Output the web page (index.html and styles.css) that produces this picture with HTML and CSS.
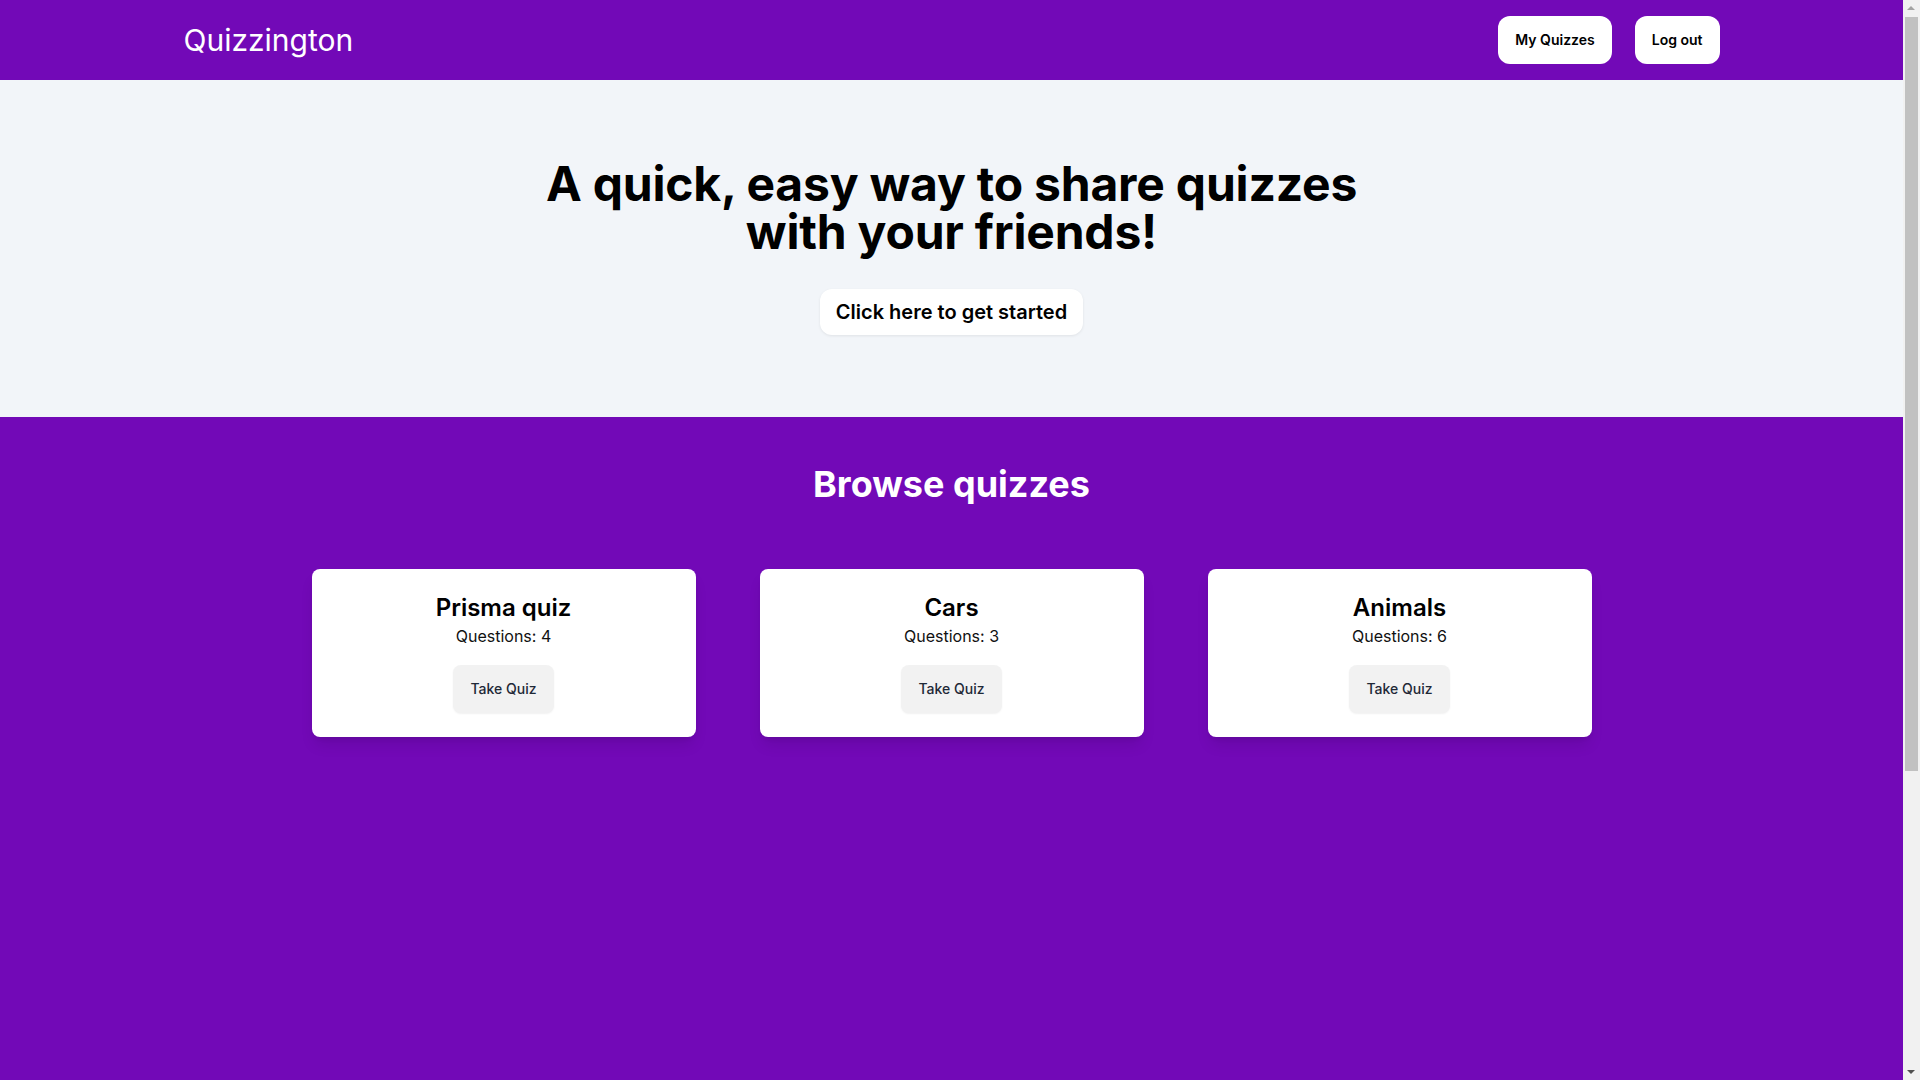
FILE: index.html
```html
<!DOCTYPE html>
<html lang="en">
<head>
<meta charset="utf-8">
<title>Quizzington</title>
<link rel="stylesheet" href="styles.css">
</head>
<body>
<div class="page">
  <header class="topbar">
    <div class="topbar-inner">
      <a class="logo" href="#">Quizzington</a>
      <nav class="nav">
        <button class="nav-btn">My Quizzes</button>
        <button class="nav-btn">Log out</button>
      </nav>
    </div>
  </header>
  <section class="hero">
    <h1 class="hero-title"><span class="line">A quick, easy way to share quizzes</span><span class="line">with your friends!</span></h1>
    <button class="hero-btn">Click here to get started</button>
  </section>
  <section class="browse">
    <h2 class="browse-title">Browse quizzes</h2>
    <div class="cards">
      <div class="card">
        <h3 class="card-title">Prisma quiz</h3>
        <p class="card-meta">Questions: 4</p>
        <button class="card-btn">Take Quiz</button>
      </div>
      <div class="card">
        <h3 class="card-title">Cars</h3>
        <p class="card-meta">Questions: 3</p>
        <button class="card-btn">Take Quiz</button>
      </div>
      <div class="card">
        <h3 class="card-title">Animals</h3>
        <p class="card-meta">Questions: 6</p>
        <button class="card-btn">Take Quiz</button>
      </div>
    </div>
  </section>
</div>
<div class="scrollbar" aria-hidden="true">
  <span class="arrow arrow-up"></span>
  <span class="thumb"></span>
  <span class="arrow arrow-down"></span>
</div>
</body>
</html>
```
FILE: styles.css
```css
* { box-sizing: border-box; }
html, body { margin: 0; padding: 0; }
body {
  font-family: Inter, "Noto Sans", sans-serif;
  color: #000;
  background: #7209b7;
  overflow: hidden;
}
button { font-family: inherit; border: none; cursor: pointer; }

.page {
  width: calc(100% - 17px);
  height: 100vh;
  display: flex;
  flex-direction: column;
}

.topbar {
  background: #7209b7;
  height: 80px;
  flex: none;
}
.topbar-inner {
  max-width: 1536px;
  height: 100%;
  margin: 0 auto;
  display: flex;
  align-items: center;
  justify-content: space-between;
}
.logo {
  color: #fff;
  text-decoration: none;
  font-size: 30px;
  line-height: 36px;
  font-weight: 400;
}
.nav { display: flex; gap: 23px; }
.nav-btn {
  background: #fff;
  color: #000;
  font-size: 14px;
  line-height: 20px;
  font-weight: 600;
  padding: 14px 17px;
  border-radius: 12px;
}

.hero {
  background: #f2f5f9;
  padding: 80px 0 82px;
  display: flex;
  flex-direction: column;
  align-items: center;
  flex: none;
}
.hero-title {
  margin: 0;
  font-size: 48px;
  font-weight: 700;
  text-align: center;
  letter-spacing: -0.2px;
  display: flex;
  flex-direction: column;
  align-items: center;
}
.hero-title .line {
  display: block;
  height: 48px;
  line-height: 48px;
}
.hero-btn {
  margin-top: 33px;
  background: #fff;
  color: #000;
  font-size: 20px;
  line-height: 28px;
  font-weight: 600;
  padding: 9px 16px;
  border-radius: 12px;
  box-shadow: 0 1px 3px rgba(0,0,0,0.08);
}

.browse {
  flex: 1;
  padding-top: 47px;
  display: flex;
  flex-direction: column;
  align-items: center;
}
.browse-title {
  margin: 0;
  color: #fff;
  font-size: 36px;
  line-height: 40px;
  font-weight: 700;
}
.cards {
  margin-top: 65px;
  width: 1280px;
  display: grid;
  grid-template-columns: repeat(3, 1fr);
  gap: 64px;
}
.card {
  background: #fff;
  border-radius: 8px;
  padding: 24px;
  display: flex;
  flex-direction: column;
  align-items: center;
  box-shadow: 0 10px 15px -3px rgba(0,0,0,0.1), 0 4px 6px -4px rgba(0,0,0,0.1);
}
.card-title {
  margin: 0;
  font-size: 24px;
  line-height: 29px;
  font-weight: 600;
}
.card-meta {
  margin: 2px 0 0;
  font-size: 16px;
  line-height: 24px;
  color: #111;
}
.card-btn {
  margin-top: 17px;
  background: #f2f2f2;
  color: #1f2937;
  font-size: 14px;
  line-height: 20px;
  font-weight: 500;
  padding: 14px 17px;
  border-radius: 8px;
  box-shadow: 0 1px 2px rgba(0,0,0,0.06);
}

.scrollbar {
  position: fixed;
  top: 0;
  right: 0;
  width: 17px;
  height: 100vh;
  background: #f1f1f1;
}
.thumb {
  position: absolute;
  left: 2px;
  right: 2px;
  top: 17px;
  height: 754px;
  background: #c1c1c1;
}
.arrow {
  position: absolute;
  left: 4px;
  width: 0;
  height: 0;
  border-left: 4.5px solid transparent;
  border-right: 4.5px solid transparent;
}
.arrow-up {
  top: 6px;
  border-bottom: 4.5px solid #a3a3a3;
}
.arrow-down {
  bottom: 6px;
  border-top: 4.5px solid #505050;
}
```
